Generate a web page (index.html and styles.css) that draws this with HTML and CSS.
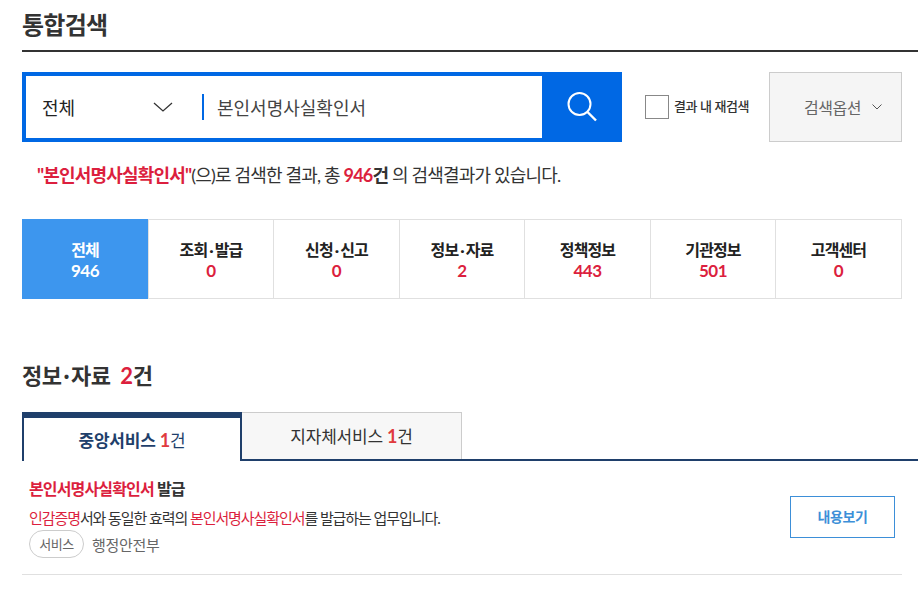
FILE: index.html
```html
<!DOCTYPE html>
<html lang="ko">
<head>
  <meta charset="UTF-8">
  <title>통합검색</title>
  <link rel="stylesheet" href="styles.css">
</head>
<body>
  <h1 class="page_title">통합검색</h1>

  <div class="search_row">
    <div class="search_box">
      <div class="search_select">
        <span>전체</span>
        <svg class="select_arrow" width="20" height="10" viewBox="0 0 20 10"><path d="M1 1l9 8 9-8" fill="none" stroke="#333" stroke-width="1.3"/></svg>
      </div>
      <div class="search_input">본인서명사실확인서</div>
      <div class="search_btn">
        <svg width="32" height="32" viewBox="0 0 32 32"><circle cx="13.5" cy="13" r="11" fill="none" stroke="#fff" stroke-width="2"/><path d="M21.500 21l8.500 8.500" fill="none" stroke="#fff" stroke-width="2.400"/></svg>
      </div>
    </div>
    <label class="re_search"><span class="check"></span><span class="re_text">결과 내 재검색</span></label>
    <div class="search_option">
      <span>검색옵션</span>
      <svg width="10" height="6" viewBox="0 0 10 6"><path d="M.5 .5l4.500 4.500 4.500-4.500" fill="none" stroke="#555" stroke-width="1"/></svg>
    </div>
  </div>

  <p class="result_msg"><b class="red">"본인서명사실확인서"</b>(으)로 검색한 결과, 총 <b class="red">946</b><b>건</b> 의 검색결과가 있습니다.</p>

  <ul class="category">
    <li class="on"><b>전체</b><em>946</em></li>
    <li><b>조회<span class="dot">·</span>발급</b><em>0</em></li>
    <li><b>신청<span class="dot">·</span>신고</b><em>0</em></li>
    <li><b>정보<span class="dot">·</span>자료</b><em>2</em></li>
    <li><b>정책정보</b><em>443</em></li>
    <li><b>기관정보</b><em>501</em></li>
    <li><b>고객센터</b><em>0</em></li>
  </ul>

  <h2 class="section_title">정보<span class="dot">·</span>자료 <span class="count"><i>2</i>건</span></h2>

  <div class="tabs">
    <div class="tab on"><b>중앙서비스</b> <i>1</i>건</div>
    <div class="tab">지자체서비스 <i>1</i>건</div>
  </div>

  <div class="result_item">
    <div class="item_text">
      <h3><span class="red">본인서명사실확인서</span> 발급</h3>
      <p class="desc"><span class="red">인감증명</span>서와 동일한 효력의 <span class="red">본인서명사실확인서</span>를 발급하는 업무입니다.</p>
      <div class="meta"><span class="tag">서비스</span><span class="org">행정안전부</span></div>
    </div>
    <div class="view_btn">내용보기</div>
  </div>
</body>
</html>
```

FILE: styles.css
```css
* {
  padding: 0;
  margin: 0;
  box-sizing: border-box;
}
body {
  width: 918px;
  padding-left: 22px;
  overflow-x: hidden;
  font-family: Lato, "Noto Sans CJK KR", sans-serif;
  color: #333;
  background: #fff;
}
ul {
  list-style: none;
}
i,
em {
  font-style: normal;
}
.red {
  color: #dc1f3e;
}
.dot {
  margin: 0 2px;
}
.page_title {
  height: 52px;
  padding-top: 6px;
  font-size: 24px;
  line-height: 38px;
  font-weight: 700;
  letter-spacing: -0.75px;
  border-bottom: 2px solid #333;
}

/* 검색 영역 */
.search_row {
  display: flex;
  align-items: center;
  width: 880px;
  margin-top: 20px;
}
.search_box {
  display: flex;
  align-items: center;
  width: 600px;
  height: 70px;
  border: 4px solid #0068e4;
}
.search_select {
  display: flex;
  align-items: center;
  justify-content: space-between;
  width: 178px;
  height: 26px;
  padding: 0 29px 0 16px;
  border-right: 2px solid #0068e4;
  font-size: 18px;
  color: #222;
}
.search_input {
  flex: 1;
  padding-left: 13px;
  font-size: 18px;
  color: #444;
}
.search_btn {
  display: flex;
  align-items: center;
  justify-content: center;
  width: 80px;
  height: 70px;
  margin: -4px -4px -4px 0;
  flex: none;
  background: #0068e4;
}
.re_search {
  display: flex;
  align-items: center;
  gap: 5px;
  margin-left: 23px;
  font-size: 13px;
  font-weight: 500;
  letter-spacing: -0.4px;
  color: #333;
}
.re_text {
  margin-top: -4px;
}
.check {
  width: 24px;
  height: 24px;
  border: 1px solid #888;
  background: #fff;
}
.search_option {
  display: flex;
  align-items: center;
  justify-content: center;
  gap: 11px;
  width: 133px;
  height: 70px;
  margin-left: auto;
  padding-left: 15px;
  border: 1px solid #ccc;
  background: #f5f5f5;
  font-size: 16px;
  letter-spacing: -0.5px;
  color: #666;
}
.result_msg {
  margin: 21px 0 0 15px;
  font-size: 18px;
  line-height: 25px;
  letter-spacing: -0.82px;
  color: #333;
}

/* 분류 탭 */
.category {
  display: grid;
  grid-template-columns: 126px 125px 126px 125px 126px 125px 126px;
  width: 880px;
  height: 80px;
  margin-top: 31px;
  border: 1px solid #e0e0e0;
  border-left: 0;
}
.category li {
  display: flex;
  flex-direction: column;
  align-items: center;
  justify-content: center;
  padding-top: 2px;
  border-left: 1px solid #e0e0e0;
  font-size: 16px;
  line-height: 20px;
  letter-spacing: -0.9px;
  color: #222;
}
.category b {
  font-weight: 700;
}
.category em {
  margin-top: 1px;
  font-size: 17px;
  font-weight: 700;
  letter-spacing: -0.5px;
  color: #dc1f3e;
}
.category li.on {
  margin: -1px 0;
  border-left: 0;
  background: #3d96ee;
  color: #fff;
}
.category li.on em {
  color: #fff;
}

.section_title {
  margin-top: 60px;
  font-size: 22px;
  line-height: 34px;
  font-weight: 700;
  letter-spacing: -0.5px;
  color: #333;
}
.count {
  margin-left: 5px;
}
.count i {
  color: #dc1f3e;
}

/* 서비스 탭 */
.tabs {
  display: flex;
  width: 896px;
  height: 49px;
  margin-top: 19px;
  border-bottom: 2px solid #1f3f6b;
}
.tab {
  width: 220px;
  height: 47px;
  border: 1px solid #ccc;
  border-bottom: 0;
  border-left: 0;
  background: #f7f7f7;
  font-size: 17px;
  line-height: 46px;
  text-align: center;
  letter-spacing: -0.2px;
  color: #333;
}
.tab i {
  font-size: 18px;
  font-weight: 700;
  color: #e03a3e;
}
.tab.on {
  height: 49px;
  border: 2px solid #1f3f6b;
  border-top-width: 6px;
  border-bottom: 0;
  background: #fff;
  color: #1f3f6b;
  line-height: 44px;
}
.tab.on b {
  font-weight: 700;
}

/* 결과 목록 */
.result_item {
  display: flex;
  align-items: flex-start;
  justify-content: space-between;
  width: 880px;
  height: 114px;
  padding: 16px 7px 0;
  border-bottom: 1px solid #e0e0e0;
}
.item_text h3 {
  font-size: 16px;
  line-height: 24px;
  font-weight: 700;
  letter-spacing: -0.85px;
  color: #333;
}
.desc {
  margin-top: 7px;
  font-size: 15px;
  line-height: 20px;
  letter-spacing: -1.08px;
}
.meta {
  display: flex;
  align-items: center;
  gap: 8px;
  margin-top: 2px;
}
.tag {
  width: 55px;
  height: 28px;
  border: 1px solid #ccc;
  border-radius: 14px;
  font-size: 13px;
  line-height: 26px;
  text-align: center;
  letter-spacing: -0.5px;
  color: #666;
}
.org {
  font-size: 15px;
  letter-spacing: -0.3px;
  color: #666;
}
.view_btn {
  width: 105px;
  height: 42px;
  margin-top: 19px;
  border: 1px solid #3d8fd8;
  font-size: 14px;
  font-weight: 700;
  line-height: 40px;
  text-align: center;
  letter-spacing: -0.4px;
  color: #3d8fd8;
}
```
